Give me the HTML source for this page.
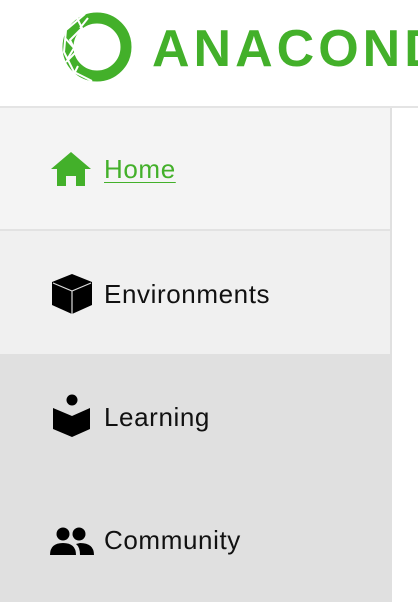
<!DOCTYPE html>
<html><head><style>
body{margin:0;width:418px;height:602px;overflow:hidden;background:#fff;font-family:"Liberation Sans",sans-serif;position:relative}
.hdr{position:absolute;left:0;top:0;width:418px;height:106px;border-bottom:2px solid #e4e4e4;background:#fff;overflow:hidden}
.logo{position:absolute;left:152px;top:19px;font-size:52px;font-weight:bold;color:#43b02a;letter-spacing:4px;white-space:nowrap}
.side{position:absolute;left:0;top:108px;width:390px;height:494px;border-right:2px solid #e0e0e0}
.row{position:absolute;left:0;width:390px;height:122px}
.row span{position:absolute;left:104px;font-size:26px;color:#111;letter-spacing:0.6px}
.row svg{position:absolute}
</style></head><body>
<div class="hdr">
<svg width="90" height="90" style="position:absolute;left:52px;top:2px" viewBox="0 0 90 90">
<circle cx="45" cy="45" r="29" fill="none" stroke="#43b02a" stroke-width="11"/>
<path d="M33 12 L14 28 L12 50 L22 70 L40 79 M24 14 L30 26 L18 38 L24 50 L14 60 M13 36 L22 46 L16 56 M26 64 L20 76 M36 16 L28 26" fill="none" stroke="#fff" stroke-width="2"/>
</svg>
<div class="logo">ANACOND</div>
</div>
<div class="side">
<div class="row" style="top:0;background:#f4f4f4;border-bottom:2px solid #e2e2e2;height:121px">
<svg width="42" height="36" style="left:51px;top:44px" viewBox="0 0 42 36"><path d="M20 0 L40 17 L34 17 L34 34 L25 34 L25 24 L15 24 L15 34 L6 34 L6 17 L0 17 Z" fill="#43b02a"/></svg>
<span style="top:46px;color:#43b02a;text-decoration:underline;text-underline-offset:4px;text-decoration-thickness:1px">Home</span>
</div>
<div class="row" style="top:123px;height:123px;background:#f0f0f0">
<svg width="44" height="42" style="left:50px;top:43px" viewBox="0 0 44 42"><path d="M22 0 L42 8 L42 31 L22 40 L2 31 L2 8 Z" fill="#000"/><path d="M3 9 L22 17 L41 9 M22 17 L22 40" stroke="#ddd" stroke-width="1.2" fill="none"/></svg>
<span style="top:48px">Environments</span>
</div>
<div class="row" style="top:246px;height:248px;background:#e0e0e0">
<svg width="40" height="44" style="left:53px;top:40px" viewBox="0 0 40 44"><circle cx="19" cy="6" r="5.5"/><path d="M0 14 L19 22 L37 14 L37 35 L19 43 L0 35 Z"/></svg>
<span style="top:48px">Learning</span>
<svg width="46" height="30" style="left:50px;top:173px" viewBox="0 0 46 30"><circle cx="13" cy="7" r="6.5"/><circle cx="29" cy="7" r="6.5"/><path d="M0 28 Q0 16 13 16 Q26 16 26 28 Z M30 16 Q44 16 44 28 L30 28 Q30 20 26 17 Z"/></svg>
<span style="top:171px">Community</span>
</div>
</div>
</body></html>
